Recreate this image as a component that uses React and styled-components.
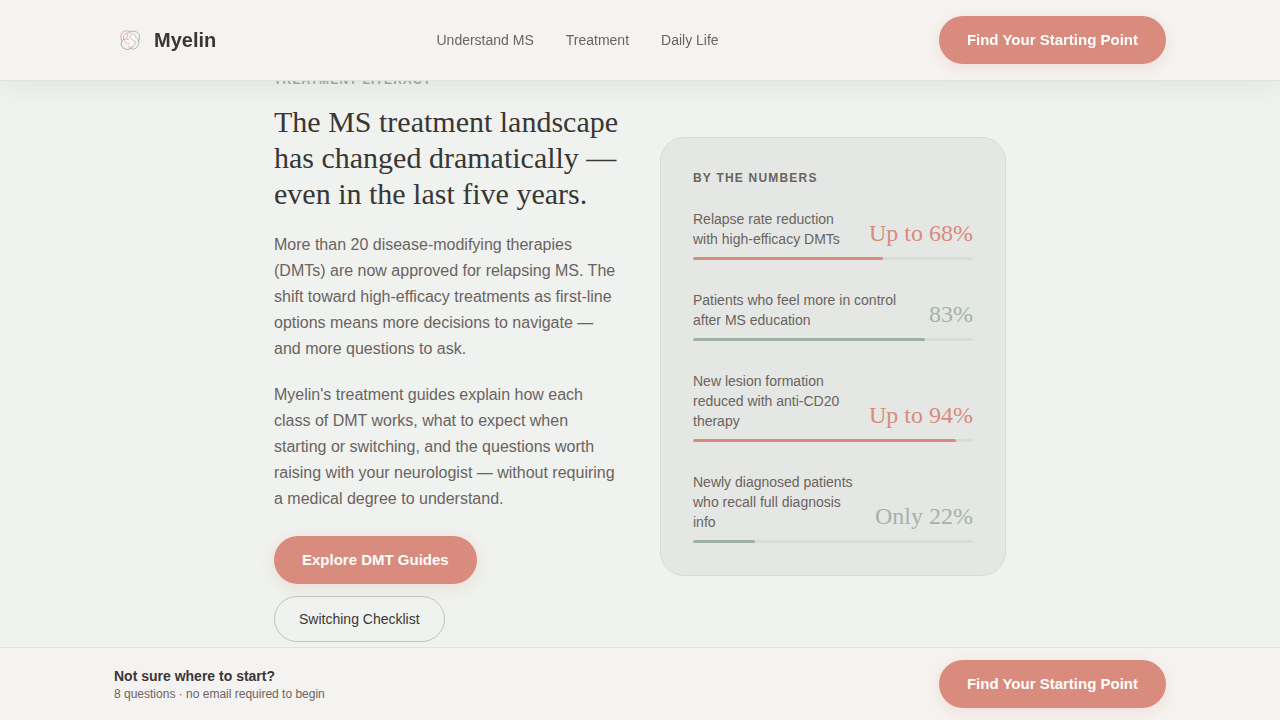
import React from "react";
import styled, { createGlobalStyle } from "styled-components";

const GlobalStyle = createGlobalStyle`
  *, *::before, *::after {
    box-sizing: border-box;
  }
  body {
    margin: 0;
    background-color: #eff2ee;
    color: #3a3636;
    font-family: "Liberation Sans", Arial, sans-serif;
  }
  h1, h2, h3, p, ul {
    margin: 0;
    padding: 0;
  }
`;

const Header = styled.header`
  position: fixed;
  top: 0;
  left: 0;
  right: 0;
  z-index: 10;
  background-color: #f5f3f1;
  border-bottom: 1px solid #e1e3df;
  box-shadow: 0 4px 24px rgba(58, 70, 64, 0.08);
`;

const Bottombar = styled.aside`
  position: fixed;
  bottom: 0;
  left: 0;
  right: 0;
  z-index: 10;
  background-color: #f5f3f1;
  border-top: 1px solid #dfe2de;
`;

const Barinner = styled.div`
  display: flex;
  align-items: center;
  justify-content: space-between;
  max-width: 1100px;
  margin: 0 auto;
  padding: ${(props) => (props.$compact ? "12px 24px" : "16px 24px")};
`;

const Brand = styled.a`
  display: flex;
  align-items: center;
  gap: 8px;
  color: #3a3636;
  font-size: 20px;
  font-weight: 700;
  text-decoration: none;
`;

const Navlist = styled.ul`
  display: flex;
  gap: 32px;
  list-style: none;
`;

const Navlink = styled.a`
  color: #6b6361;
  font-size: 14px;
  line-height: 20px;
  text-decoration: none;
`;

const Primarybutton = styled.button`
  padding: 15px 28px;
  border: none;
  border-radius: 24px;
  background-color: #d98b7e;
  box-shadow: 0 4px 16px rgba(217, 139, 126, 0.2);
  color: #fffdfb;
  font-family: inherit;
  font-size: 15px;
  font-weight: 700;
  line-height: 18px;
  cursor: pointer;
`;

const Outlinebutton = styled.button`
  height: 46px;
  padding: 0 24px;
  border: 1px solid #c3c3c1;
  border-radius: 23px;
  background-color: transparent;
  color: #3a3636;
  font-family: inherit;
  font-size: 14px;
  cursor: pointer;
`;

const Main = styled.main`
  padding: 71px 24px 76px;
`;

const Columns = styled.section`
  display: grid;
  grid-template-columns: 1fr 1fr;
  align-items: center;
  gap: 40px;
  max-width: 732px;
  margin: 0 auto;
`;

const Eyebrow = styled.p`
  margin-bottom: 15px;
  color: #9caea3;
  font-size: 12px;
  font-weight: 700;
  line-height: 18px;
  letter-spacing: 0.1em;
  text-transform: uppercase;
`;

const Title = styled.h2`
  margin-bottom: 20px;
  font-family: "Liberation Serif", "Times New Roman", serif;
  font-size: 30px;
  font-weight: 400;
  line-height: 36px;
`;

const Paragraph = styled.p`
  margin-bottom: 20px;
  color: #6b6361;
  font-size: 16px;
  line-height: 26px;
`;

const Actions = styled.div`
  display: flex;
  flex-wrap: wrap;
  gap: 12px;
  padding-top: 4px;
`;

const Card = styled.div`
  padding: 32px;
  border: 1px solid #d8dbd7;
  border-radius: 24px;
  background-color: #e4e7e3;
`;

const Cardtitle = styled.h3`
  margin-bottom: 22px;
  color: #6b6361;
  font-size: 12px;
  font-weight: 700;
  line-height: 17px;
  letter-spacing: 0.1em;
  text-transform: uppercase;
`;

const Stat = styled.div`
  & + & {
    margin-top: 30px;
  }
`;

const Statrow = styled.div`
  display: flex;
  align-items: flex-end;
  justify-content: space-between;
  gap: 16px;
  margin-bottom: 8px;
`;

const Statlabel = styled.span`
  color: #6b6361;
  font-size: 14px;
  line-height: 20px;
`;

const Statvalue = styled.span`
  color: ${(props) => (props.$tone === "coral" ? "#d98b7e" : "#a3b3a9")};
  font-family: "Liberation Serif", "Times New Roman", serif;
  font-size: 24px;
  line-height: 32px;
  white-space: nowrap;
`;

const Track = styled.div`
  height: 3px;
  border-radius: 2px;
  background-color: #d9dcd8;
  overflow: hidden;
`;

const Fill = styled.div`
  height: 3px;
  border-radius: 2px;
  background-color: ${(props) =>
    props.$tone === "coral" ? "#d98b7e" : "#9db0a5"};
`;

const Prompt = styled.p`
  font-size: 14px;
  font-weight: 700;
  line-height: 20px;
`;

const Promptnote = styled.p`
  color: #6b6361;
  font-size: 12px;
  line-height: 16px;
`;

const navItems = ["Understand MS", "Treatment", "Daily Life"];

const stats = [
  {
    label: "Relapse rate reduction with high-efficacy DMTs",
    value: "Up to 68%",
    percent: 68,
    tone: "coral",
  },
  {
    label: "Patients who feel more in control after MS education",
    value: "83%",
    percent: 83,
    tone: "sage",
  },
  {
    label: "New lesion formation reduced with anti-CD20 therapy",
    value: "Up to 94%",
    percent: 94,
    tone: "coral",
  },
  {
    label: "Newly diagnosed patients who recall full diagnosis info",
    value: "Only 22%",
    percent: 22,
    tone: "sage",
  },
];

function Logo() {
  return (
    <svg width="32" height="32" viewBox="0 0 32 32" fill="none" aria-hidden="true">
      <circle cx="15.5" cy="15.500" r="5.500" fill="#fcfaf8" />
      <g strokeWidth="0.9" strokeLinecap="round">
        <path d="M8 17c-2-3-1.500-7 1-9s6-1.500 7.500 1" stroke="#dc9f94" />
        <path d="M10 16c-1.500-2.500-.5-5.500 2-6.500" stroke="#cfaea7" />
        <path d="M13.500 9c2.500-2.500 7.500-2.500 10.200-.2s2.600 6.200.3 8.700" stroke="#aeb0ac" />
        <path d="M17 10c2.500-1 5 1 5 3.500" stroke="#bdbfbb" />
        <path d="M23.500 14c2.300 3 1.500 8-1.500 10s-6 .5-7.500-1.500" stroke="#aeb0ac" />
        <path d="M18.500 22.500c-1.500 3-5.500 3.800-8.500 2s-3.500-5-2-7.500 4.500-2.500 6.500-1.500" stroke="#a8a3a0" />
        <path d="M21 17.500c1 2.500-1 5-3.500 5.500" stroke="#bdbfbb" />
        <path d="M12.500 9.500c2 .5 1.500 2.500.5 4M17.500 11c-2 1-2 3 0 4s2 3 3.500 2.500" stroke="#dc9f94" />
        <path d="M11 17c.5 2 2.500 3.500 4.500 2.500" stroke="#cfaea7" />
      </g>
    </svg>
  );
}

function StatItem(props) {
  return (
    <Stat>
      <Statrow>
        <Statlabel>{props.label}</Statlabel>
        <Statvalue $tone={props.tone}>{props.value}</Statvalue>
      </Statrow>
      <Track>
        <Fill $tone={props.tone} style={{ width: `${props.percent}%` }} />
      </Track>
    </Stat>
  );
}

function App() {
  return (
    <>
      <GlobalStyle />
      <Header>
        <Barinner>
          <Brand href="#">
            <Logo />
            Myelin
          </Brand>
          <nav>
            <Navlist>
              {navItems.map((item) => (
                <li key={item}>
                  <Navlink href="#">{item}</Navlink>
                </li>
              ))}
            </Navlist>
          </nav>
          <Primarybutton type="button">Find Your Starting Point</Primarybutton>
        </Barinner>
      </Header>

      <Main>
        <Columns>
          <div>
            <Eyebrow>Treatment literacy</Eyebrow>
            <Title>
              The MS treatment landscape has changed dramatically — even in the
              last five years.
            </Title>
            <Paragraph>
              More than 20 disease-modifying therapies (DMTs) are now approved
              for relapsing MS. The shift toward high-efficacy treatments as
              first-line options means more decisions to navigate — and more
              questions to ask.
            </Paragraph>
            <Paragraph>
              Myelin's treatment guides explain how each class of DMT works,
              what to expect when starting or switching, and the questions worth
              raising with your neurologist — without requiring a medical degree
              to understand.
            </Paragraph>
            <Actions>
              <Primarybutton type="button">Explore DMT Guides</Primarybutton>
              <Outlinebutton type="button">Switching Checklist</Outlinebutton>
            </Actions>
          </div>
          <Card>
            <Cardtitle>By the numbers</Cardtitle>
            {stats.map((stat) => (
              <StatItem key={stat.label} {...stat} />
            ))}
          </Card>
        </Columns>
      </Main>

      <Bottombar>
        <Barinner $compact>
          <div>
            <Prompt>Not sure where to start?</Prompt>
            <Promptnote>8 questions · no email required to begin</Promptnote>
          </div>
          <Primarybutton type="button">Find Your Starting Point</Primarybutton>
        </Barinner>
      </Bottombar>
    </>
  );
}

export default App;
